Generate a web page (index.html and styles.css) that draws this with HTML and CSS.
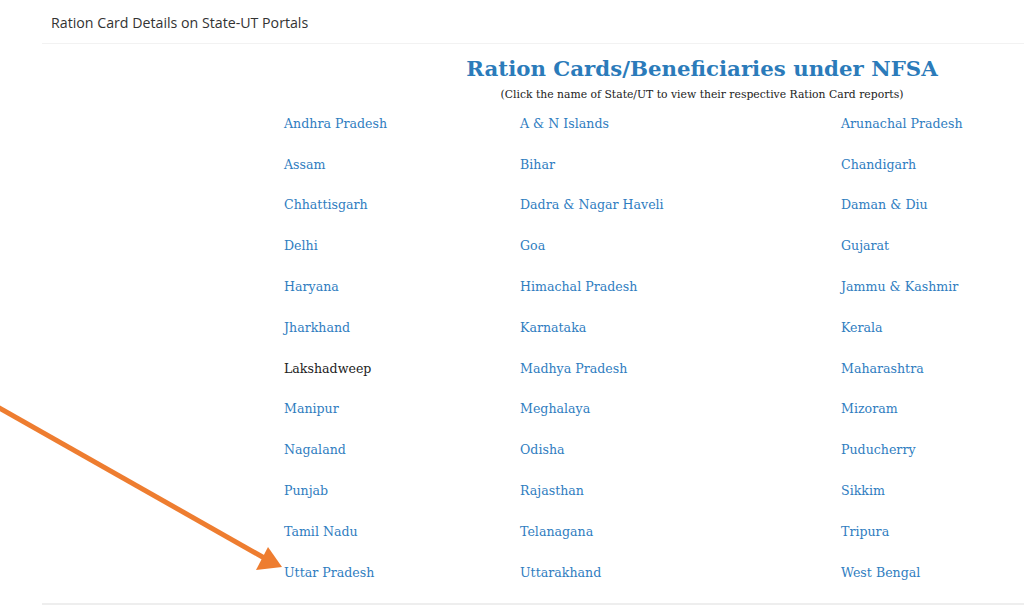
FILE: index.html
```html
<!DOCTYPE html>
<html>
<head>
<meta charset="utf-8">
<link rel="stylesheet" href="styles.css">
</head>
<body>
<div class="panel">
  <div class="panel-head">Ration Card Details on State-UT Portals</div>
  <div class="panel-body">
    <h2 class="title">Ration Cards/Beneficiaries under NFSA</h2>
    <p class="subtitle">(Click the name of State/UT to view their respective Ration Card reports)</p>
    <div class="states">
      <a class="st">Andhra Pradesh</a><a class="st">A &amp; N Islands</a><a class="st">Arunachal Pradesh</a>
      <a class="st">Assam</a><a class="st">Bihar</a><a class="st">Chandigarh</a>
      <a class="st">Chhattisgarh</a><a class="st">Dadra &amp; Nagar Haveli</a><a class="st">Daman &amp; Diu</a>
      <a class="st">Delhi</a><a class="st">Goa</a><a class="st">Gujarat</a>
      <a class="st">Haryana</a><a class="st">Himachal Pradesh</a><a class="st">Jammu &amp; Kashmir</a>
      <a class="st">Jharkhand</a><a class="st">Karnataka</a><a class="st">Kerala</a>
      <span class="st plain">Lakshadweep</span><a class="st">Madhya Pradesh</a><a class="st">Maharashtra</a>
      <a class="st">Manipur</a><a class="st">Meghalaya</a><a class="st">Mizoram</a>
      <a class="st">Nagaland</a><a class="st">Odisha</a><a class="st">Puducherry</a>
      <a class="st">Punjab</a><a class="st">Rajasthan</a><a class="st">Sikkim</a>
      <a class="st">Tamil Nadu</a><a class="st">Telanagana</a><a class="st">Tripura</a>
      <a class="st">Uttar Pradesh</a><a class="st">Uttarakhand</a><a class="st">West Bengal</a>
    </div>
  </div>
</div>
<svg class="arrow" width="300" height="613" viewBox="0 0 300 613">
  <line x1="-4" y1="406" x2="266" y2="559" stroke="#ee7d30" stroke-width="5"/>
  <polygon points="282,567 256,570 268,547" fill="#ee7d30"/>
</svg>
</body>
</html>
```

FILE: styles.css
```css
html, body {
  margin: 0;
  padding: 0;
  background: #fff;
}
body {
  width: 1024px;
  height: 613px;
  overflow: hidden;
  position: relative;
}
.panel {
  margin-left: 42px;
  border-bottom: 2px solid #eeeeee;
}
.panel-head {
  font-family: "Open Sans", "Noto Sans", sans-serif;
  font-size: 14.2px;
  color: #333;
  padding: 13px 9px 10px;
  border-bottom: 1px solid #f2f2f2;
  line-height: 20px;
}
.panel-body {
  padding: 10px 0 10px 242px;
}
.title {
  font-family: "DejaVu Serif", Georgia, serif;
  font-weight: bold;
  font-size: 21.3px;
  color: #2b7bba;
  margin: 0 0 0 96px;
  line-height: 30px;
  text-align: center;
}
.subtitle {
  font-family: "DejaVu Serif", Georgia, serif;
  font-size: 10.8px;
  color: #222;
  margin: 3px 0 0 96px;
  line-height: 16px;
  text-align: center;
}
.states {
  display: grid;
  grid-template-columns: 236px 321px auto;
  grid-auto-rows: 40.8px;
  margin-top: 0;
  align-items: center;
}
.st {
  font-family: "DejaVu Serif", Georgia, serif;
  font-size: 12.6px;
  color: #2f7dbf;
  text-decoration: none;
}
.st.plain {
  color: #222;
}
.arrow {
  position: absolute;
  left: 0;
  top: 0;
}
```
